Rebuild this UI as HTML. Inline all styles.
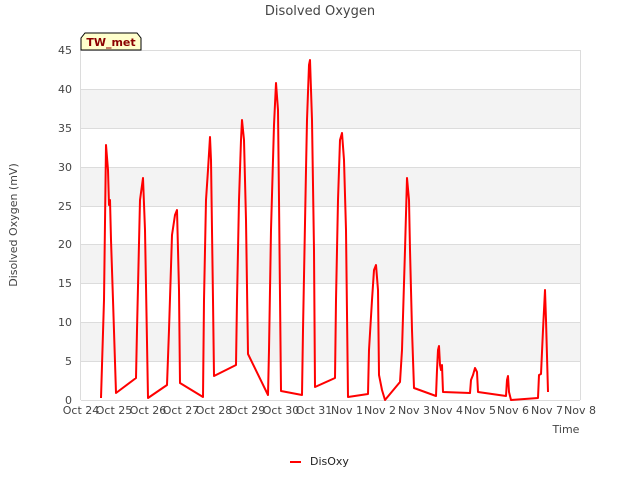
<!DOCTYPE html>
<html><head><meta charset="utf-8"><style>
body{margin:0;background:#fff;width:640px;height:480px;overflow:hidden}
text{font-family:"DejaVu Sans","Liberation Sans",sans-serif}
</style></head><body>
<svg width="640" height="480" xmlns="http://www.w3.org/2000/svg">
<rect x="0" y="0" width="640" height="480" fill="#fff"/>
<g fill="#f3f3f3">
<rect x="81" y="89" width="499" height="39"/>
<rect x="81" y="167" width="499" height="39"/>
<rect x="81" y="244" width="499" height="39"/>
<rect x="81" y="322" width="499" height="39"/>
</g>
<g stroke="#dcdcdc" stroke-width="1">
<line x1="81" y1="50.5" x2="580" y2="50.5"/>
<line x1="81" y1="89.5" x2="580" y2="89.5"/>
<line x1="81" y1="128.5" x2="580" y2="128.5"/>
<line x1="81" y1="167.5" x2="580" y2="167.5"/>
<line x1="81" y1="206.5" x2="580" y2="206.5"/>
<line x1="81" y1="244.5" x2="580" y2="244.5"/>
<line x1="81" y1="283.5" x2="580" y2="283.5"/>
<line x1="81" y1="322.5" x2="580" y2="322.5"/>
<line x1="81" y1="361.5" x2="580" y2="361.5"/>
<line x1="81" y1="400.5" x2="580" y2="400.5"/>
<line x1="80.5" y1="50" x2="80.5" y2="400"/>
<line x1="580.5" y1="50" x2="580.5" y2="400"/>
</g>
<g font-size="11" fill="#444" text-anchor="end">
<text x="72" y="54">45</text><text x="72" y="93">40</text><text x="72" y="132">35</text>
<text x="72" y="171">30</text><text x="72" y="210">25</text><text x="72" y="248">20</text>
<text x="72" y="287">15</text><text x="72" y="326">10</text><text x="72" y="365">5</text>
<text x="72" y="404">0</text>
</g>
<g font-size="11" fill="#444" text-anchor="middle">
<text x="81" y="414">Oct 24</text><text x="114" y="414">Oct 25</text><text x="148" y="414">Oct 26</text>
<text x="181" y="414">Oct 27</text><text x="214" y="414">Oct 28</text><text x="247" y="414">Oct 29</text>
<text x="281" y="414">Oct 30</text><text x="314" y="414">Oct 31</text><text x="347" y="414">Nov 1</text>
<text x="380" y="414">Nov 2</text><text x="414" y="414">Nov 3</text><text x="447" y="414">Nov 4</text>
<text x="480" y="414">Nov 5</text><text x="513" y="414">Nov 6</text><text x="547" y="414">Nov 7</text>
<text x="580" y="414">Nov 8</text>
</g>
<text x="566" y="433" font-size="11" fill="#444" text-anchor="middle">Time</text>
<text x="320" y="15" font-size="13" fill="#444" text-anchor="middle">Disolved Oxygen</text>
<text transform="translate(17,225) rotate(-90)" font-size="11" fill="#444" text-anchor="middle">Disolved Oxygen (mV)</text>
<polyline fill="none" stroke="#ff0000" stroke-width="2" stroke-linejoin="round" points="101,398 104,300 106,145 108,170 109,205 110,200 111,240 113,300 116,393 136,378 137,330 140,200 143,178 145,230 148,398 167,385 169,330 172,235 175,215 177,210 179,290 180,383 203,397 204,300 206,200 208,170 210,137 211,160 213,300 214,376 236,365 237,300 239,200 241,140 242,120 244,140 246,220 248,354 268,395 269,350 271,230 274,125 276,83 278,110 279,200 281,391 302,395 303,330 306,170 307,120 309,65 310,60 312,120 314,250 315,387 335,378 336,300 338,200 340,140 342,133 344,160 346,230 348,397 368,394 369,350 372,300 374,270 376,265 378,290 379,375 382,390 385,400 400,382 402,350 405,250 407,178 409,200 410,250 412,330 414,388 436,396 437,370 438,350 439,346 440,365 441,370 442,365 443,392 470,393 471,380 473,375 475,368 477,372 478,392 506,396 507,380 508,376 509,392 511,400 538,398 539,375 541,374 543,330 545,290 546,320 548,392"/>
<path d="M81,50 L81,38 L85,33 L137,33 L141,38 L141,50 Z" fill="#ffffcc" stroke="#000" stroke-width="1"/>
<text x="111" y="46" font-size="11" font-weight="bold" fill="#8b0000" text-anchor="middle">TW_met</text>
<line x1="290" y1="462" x2="301" y2="462" stroke="#ff0000" stroke-width="2"/>
<text x="310" y="465" font-size="11" fill="#222">DisOxy</text>
</svg>
</body></html>
